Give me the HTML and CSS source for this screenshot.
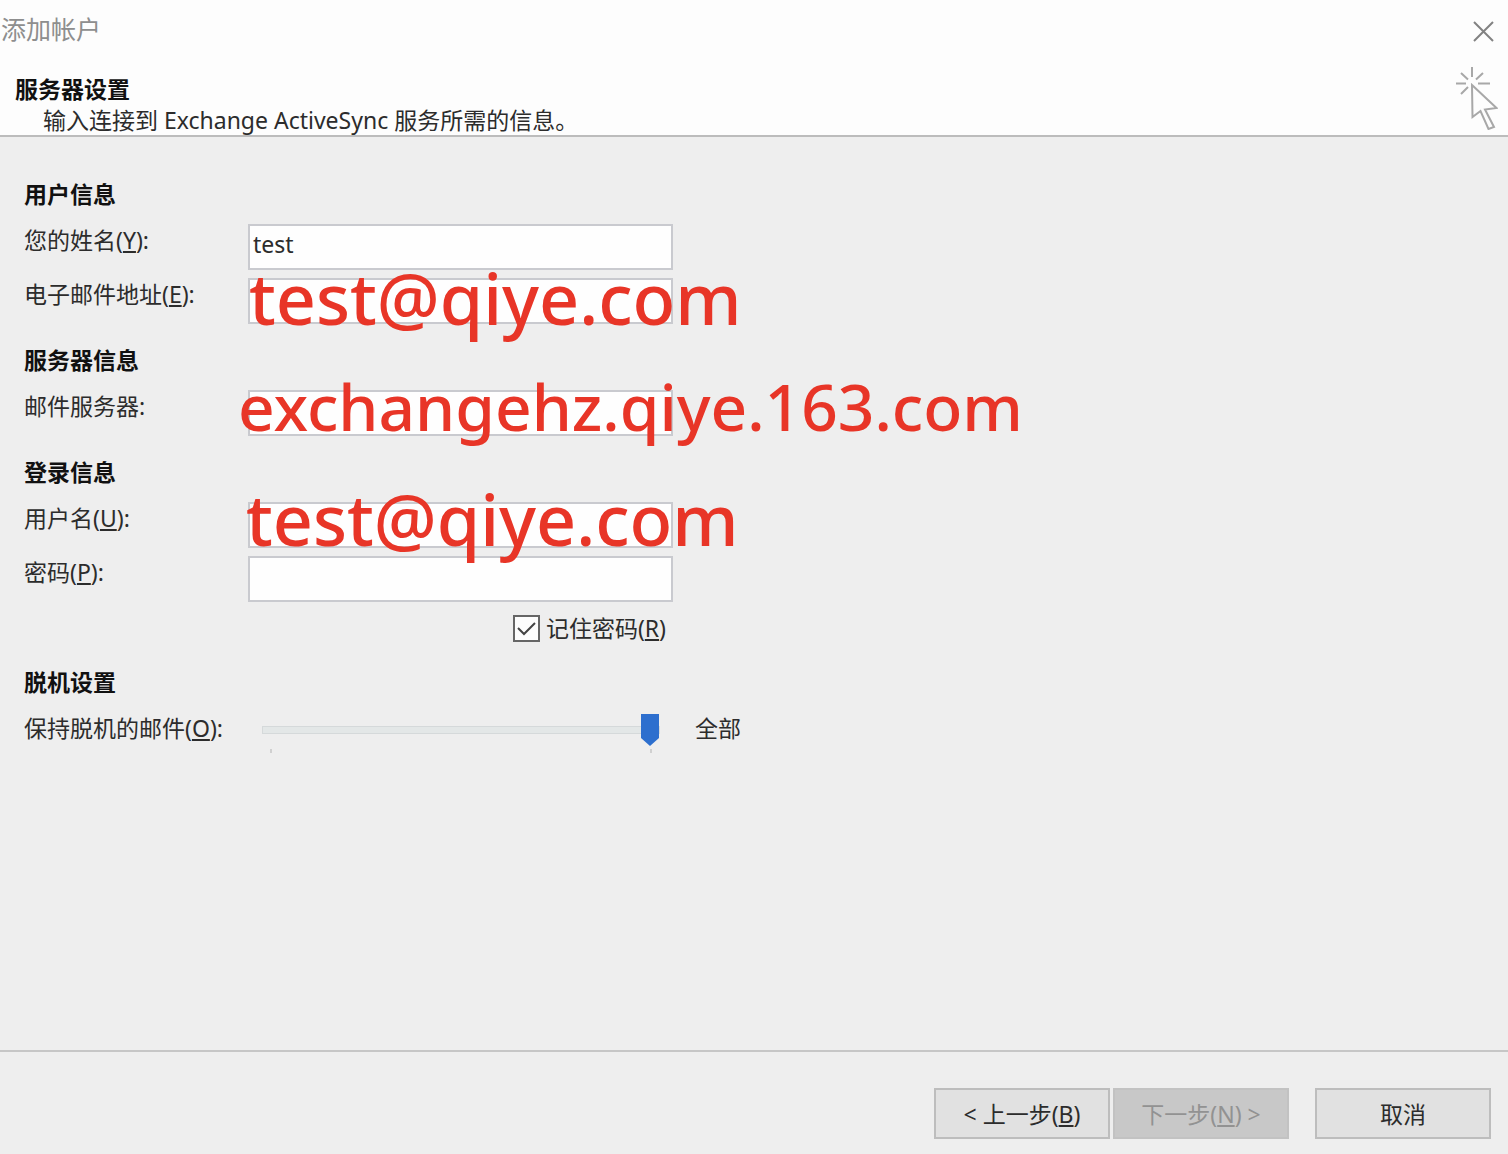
FILE: index.html
```html
<!DOCTYPE html>
<html lang="zh-CN">
<head>
<meta charset="utf-8">
<meta name="viewport" content="width=device-width, initial-scale=1">
<title>添加帐户</title>
<link rel="stylesheet" href="styles.css">
</head>
<body>
<form class="dialog">
  <header class="header">
    <div class="titlebar">
      <span class="title">添加帐户</span>
      <button class="close" type="button" aria-label="关闭">
        <svg width="21" height="21" viewBox="0 0 21 21" aria-hidden="true"><path d="M1 1 20 20M20 1 1 20"/></svg>
      </button>
    </div>
    <div class="intro">
      <div>
        <h1 class="heading">服务器设置</h1>
        <p class="description">输入连接到 Exchange ActiveSync 服务所需的信息。</p>
      </div>
      <svg class="wizard-icon" width="43" height="64" viewBox="25 65 43 64" aria-hidden="true">
        <path d="M42 66v10M26 82.500h10M48 82.500h12M31 72l7 6.500M53 72l-7 6.500M31 93l7-7"/>
        <path class="arrow" d="M42 84 66.500 107 55 108.500 64 126 58.500 128 50.500 110 42.500 116Z"/>
      </svg>
    </div>
  </header>

  <main class="content">
    <section class="group">
      <h2 class="heading">用户信息</h2>
      <div class="row">
        <label for="name">您的姓名(<u>Y</u>):</label>
        <div class="field"><input class="box" id="name" type="text" value="test"></div>
      </div>
      <div class="row">
        <label for="email">电子邮件地址(<u>E</u>):</label>
        <div class="field"><input class="box" id="email" type="text"><span class="note">test@qiye.com</span></div>
      </div>
    </section>

    <section class="group">
      <h2 class="heading">服务器信息</h2>
      <div class="row">
        <label for="server">邮件服务器:</label>
        <div class="field"><input class="box" id="server" type="text"><span class="note note-server">exchangehz.qiye.163.com</span></div>
      </div>
    </section>

    <section class="group">
      <h2 class="heading">登录信息</h2>
      <div class="row">
        <label for="user">用户名(<u>U</u>):</label>
        <div class="field"><input class="box" id="user" type="text"><span class="note note-user">test@qiye.com</span></div>
      </div>
      <div class="row">
        <label for="password">密码(<u>P</u>):</label>
        <div class="field"><input class="box" id="password" type="password"></div>
      </div>
      <div class="remember">
        <input class="check" id="remember" type="checkbox" checked>
        <label for="remember">记住密码(<u>R</u>)</label>
      </div>
    </section>

    <section class="group">
      <h2 class="heading">脱机设置</h2>
      <div class="row">
        <label for="offline">保持脱机的邮件(<u>O</u>):</label>
        <div class="slider">
          <div class="slider-body">
            <input class="range" id="offline" type="range" min="0" max="10" value="10">
            <div class="ticks"><i></i><i></i></div>
          </div>
          <output for="offline">全部</output>
        </div>
      </div>
    </section>
  </main>

  <footer class="footer">
    <div class="steps">
      <button class="button" type="button">&lt; 上一步(<u>B</u>)</button>
      <button class="button" type="button" disabled>下一步(<u>N</u>) &gt;</button>
    </div>
    <button class="button" type="button">取消</button>
  </footer>
</form>
</body>
</html>
```
FILE: styles.css
```css
* {
  box-sizing: border-box;
}

body,
h1,
h2,
p {
  margin: 0;
}

body,
input,
button {
  font: 23px/32px "Noto Sans", "Noto Sans CJK SC", sans-serif;
  color: #2c2c2c;
}

u {
  text-decoration-thickness: 2px;
  text-underline-offset: 2px;
}

.dialog {
  display: flex;
  flex-direction: column;
  min-height: 100vh;
  background: #eeeeee;
}

.header {
  background: #fdfdfd;
  border-bottom: 2px solid #bcbcbc;
}

.titlebar {
  display: flex;
  align-items: center;
  justify-content: space-between;
  height: 58px;
  padding: 0 14px 0 1px;
}

.title {
  font-size: 25px;
  color: #8e8e8e;
}

.close {
  display: flex;
  padding: 4px 0 0;
  border: 0;
  background: none;
}

.close svg {
  fill: none;
  stroke: #828282;
  stroke-width: 2;
}

.intro {
  display: flex;
  justify-content: space-between;
  padding: 0 10px 0 15px;
}

.intro .heading {
  margin-top: 15px;
}

.heading {
  font-size: 23px;
  line-height: 32px;
  font-weight: 700;
  color: #111111;
}

.description {
  padding-left: 28px;
  line-height: 30px;
}

.wizard-icon {
  margin-top: 8px;
  fill: none;
  stroke: #a8a8a8;
  stroke-width: 2;
}

.wizard-icon .arrow {
  fill: #fdfdfd;
}

.content {
  flex: 1;
  display: flex;
  flex-direction: column;
  gap: 20px;
  padding: 41px 24px;
}

.group {
  display: flex;
  flex-direction: column;
  gap: 8px;
}

.group .heading {
  margin-bottom: 6px;
}

.row {
  display: grid;
  grid-template-columns: 224px minmax(0, 1fr);
}

.field {
  position: relative;
  max-width: 425px;
}

.box {
  display: block;
  width: 100%;
  height: 46px;
  padding: 0 3px 6px;
  border: 2px solid #c9cacf;
  border-radius: 0;
  background: #fefefe;
}

.note {
  position: absolute;
  z-index: 1;
  left: 1px;
  top: -25px;
  font-size: 70px;
  font-weight: 500;
  line-height: 90px;
  white-space: nowrap;
  color: #e83527;
  pointer-events: none;
}

.note-server {
  left: -10px;
  top: -28px;
  font-size: 64px;
}

.note-user {
  left: -2px;
  top: -28px;
}

.remember {
  display: flex;
  align-items: center;
  justify-content: flex-end;
  gap: 6px;
  width: 642px;
  margin: 2px 0;
}

.check {
  appearance: none;
  width: 27px;
  height: 27px;
  margin: 0;
  border: 2px solid #666666;
  background: #fdfdfd url("data:image/svg+xml,%3Csvg xmlns='http://www.w3.org/2000/svg' viewBox='0 0 23 23'%3E%3Cpath d='M3 11l6 6L20 6' fill='none' stroke='%23444' stroke-width='2'/%3E%3C/svg%3E") center / 23px no-repeat;
}

.check:not(:checked) {
  background-image: none;
}

.slider {
  display: flex;
  gap: 35px;
  padding-left: 14px;
}

.slider-body {
  width: 398px;
  padding-top: 1px;
}

.range {
  appearance: none;
  display: block;
  width: 100%;
  height: 34px;
  margin: 0;
  background: none;
}

.range::-webkit-slider-runnable-track {
  height: 8px;
  border: 1px solid #d5d9da;
  background: #e3e7e7;
}

.range::-webkit-slider-thumb {
  appearance: none;
  width: 18px;
  height: 32px;
  margin-top: -13px;
  background: #2d6fce;
  clip-path: polygon(0 0, 100% 0, 100% 75%, 50% 100%, 0 75%);
}

.ticks {
  display: flex;
  justify-content: space-between;
  padding: 2px 8px 0;
}

.ticks i {
  width: 2px;
  height: 4px;
  background: #d0d0d0;
}

.footer {
  display: flex;
  justify-content: flex-end;
  gap: 26px;
  padding: 36px 17px 15px;
  border-top: 2px solid #c6c6c6;
}

.steps {
  display: flex;
  gap: 3px;
}

.button {
  width: 176px;
  height: 51px;
  padding: 0;
  border: 2px solid #bdbdbd;
  background: #e1e1e1;
}

.button:disabled {
  border-color: #c2c2c2;
  background: #c8c8c8;
  color: #929292;
}
```
